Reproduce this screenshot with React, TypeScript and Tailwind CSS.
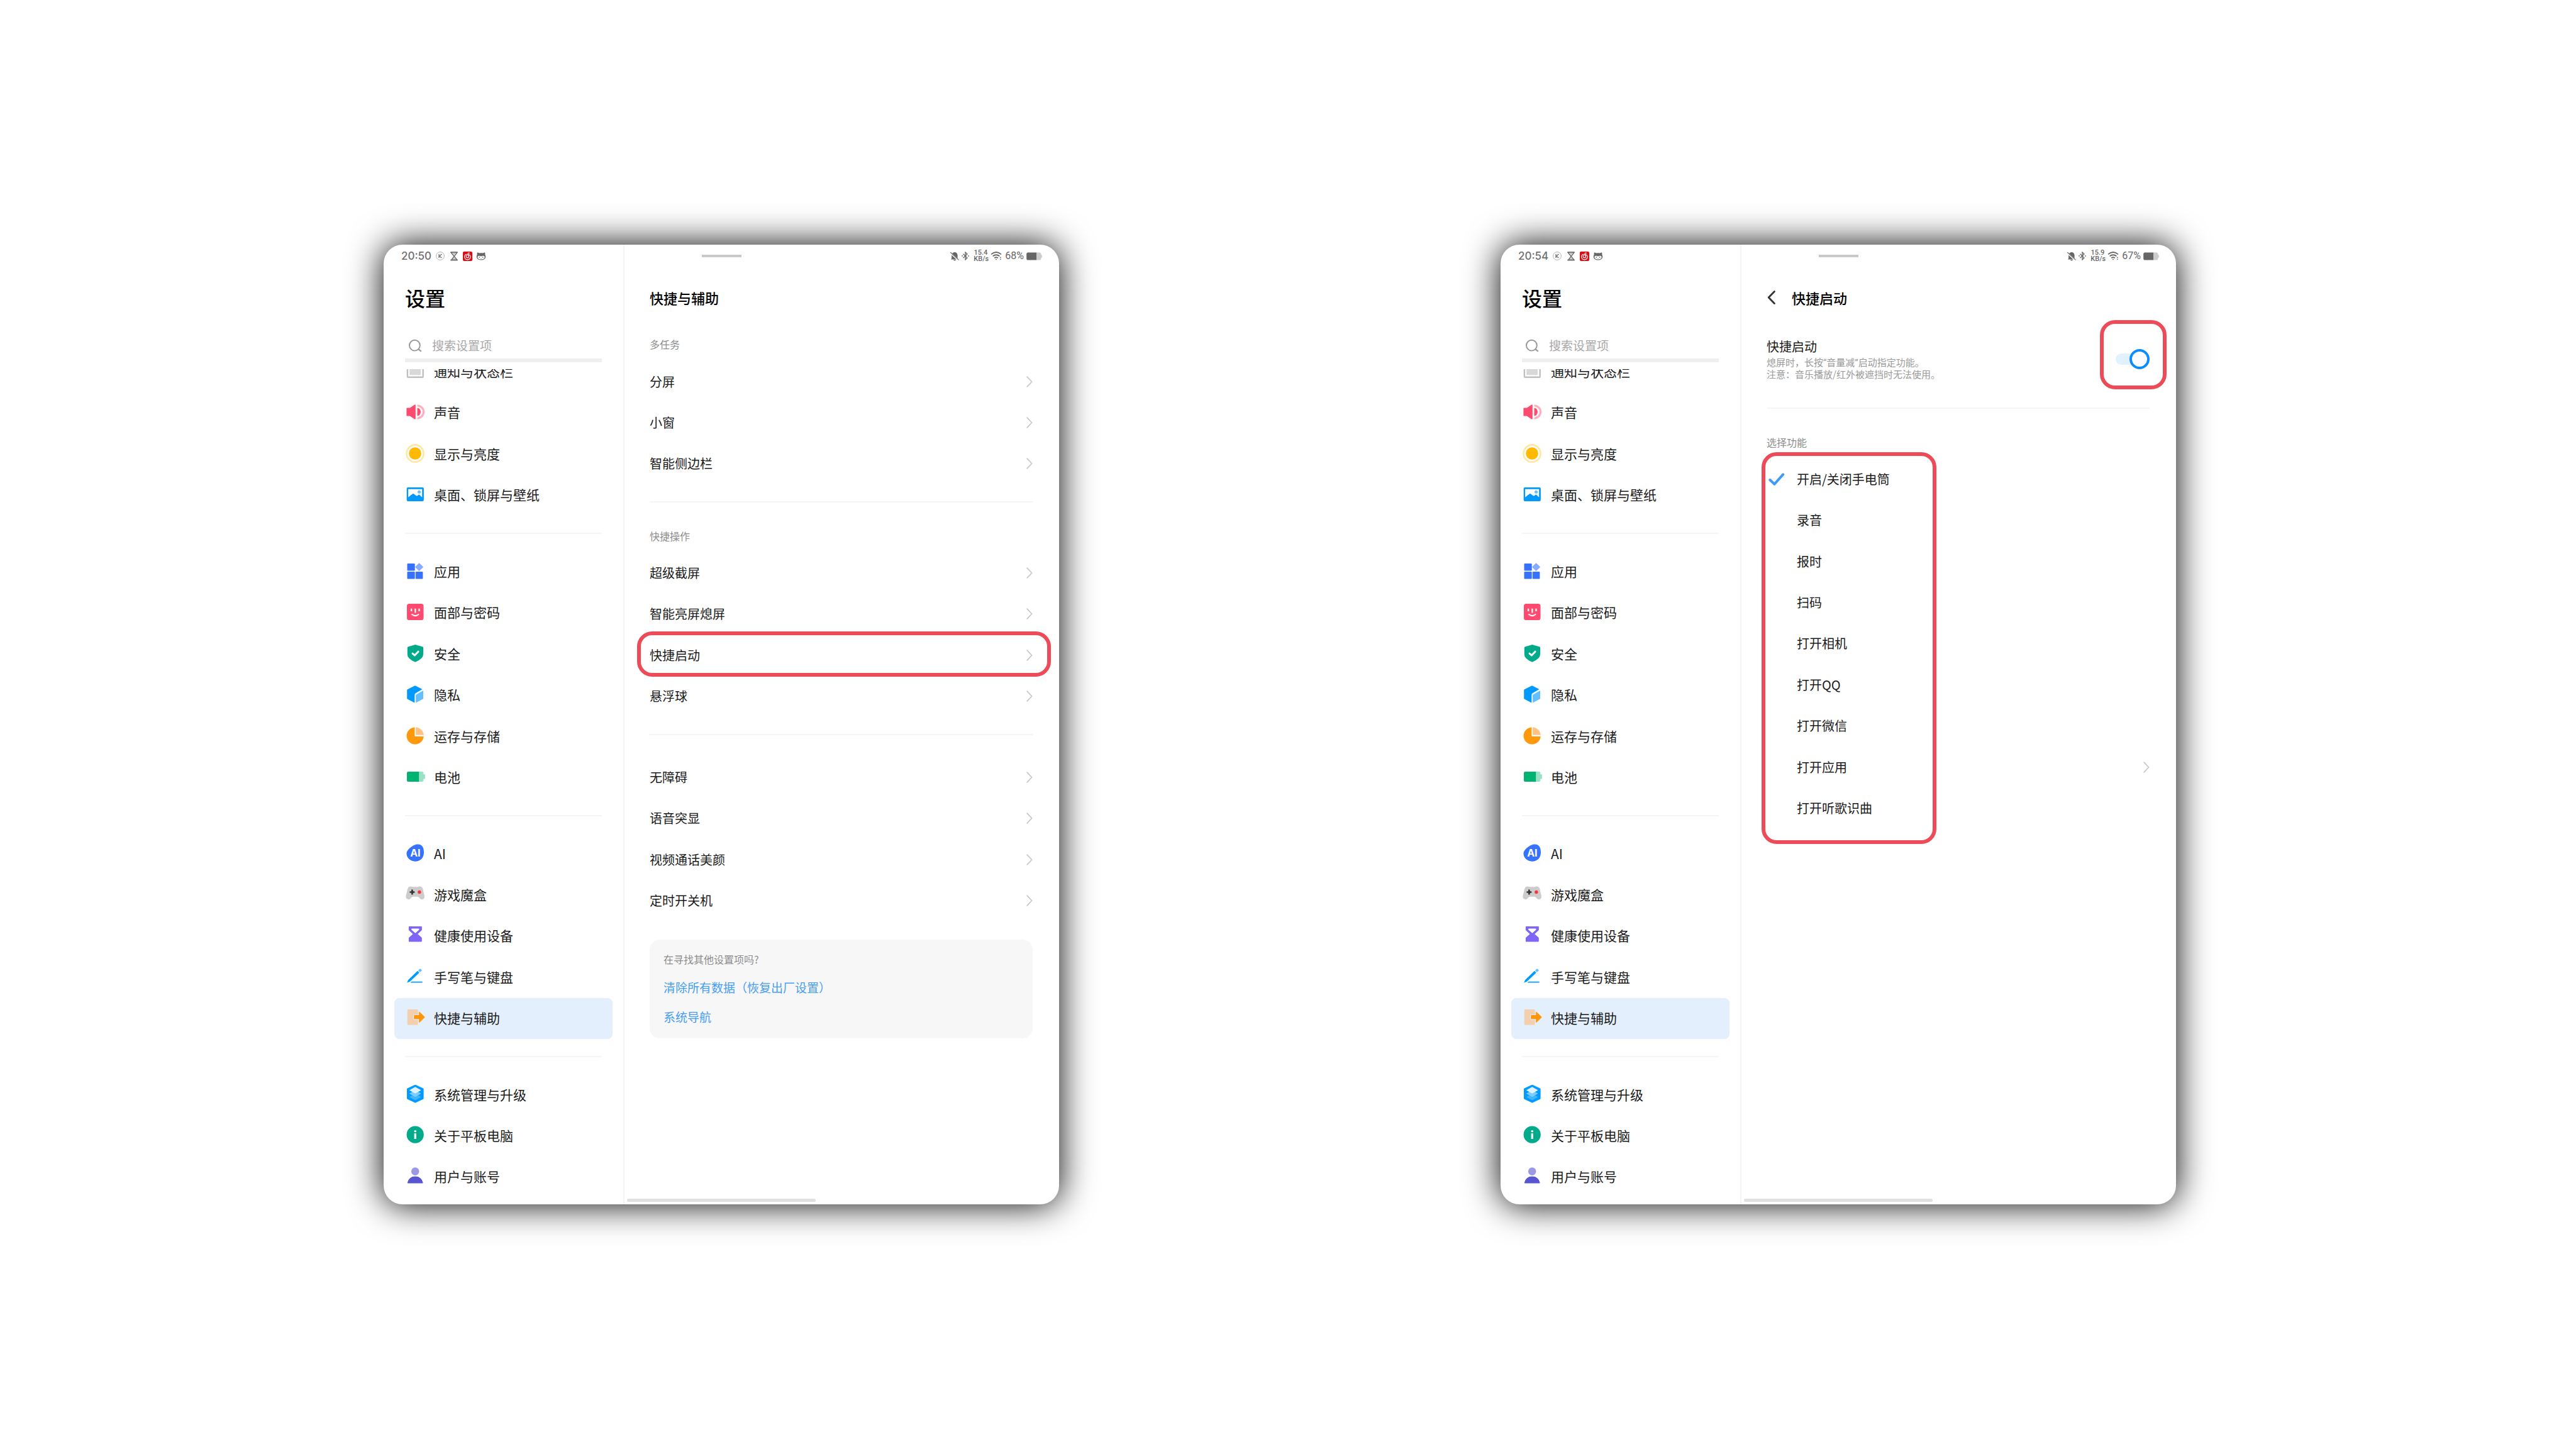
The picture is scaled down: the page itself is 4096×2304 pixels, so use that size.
import React, { useState } from 'react';
import clsx from 'clsx';

interface MenuItem {
  label: string;
  icon: React.ReactNode;
}

const Svg: React.FC<{ children: React.ReactNode }> = ({ children }) => (
  <svg viewBox="0 0 32 32" fill="none" className="w-8 h-8 shrink-0" aria-hidden="true">{children}</svg>
);

const icons = {
  notify: (
    <Svg>
      <rect x="3.9" y="6.3" width="24.8" height="19.5" rx="1.6" stroke="#c0c0c0" strokeWidth="2.4" />
      <rect x="7.3" y="9.8" width="17.7" height="12.5" fill="#d8d8d8" />
    </Svg>
  ),
  sound: (
    <Svg>
      <path d="M3.4 9.6H7.8L15.2 4.6Q16.8 3.8 16.8 5.4V26.6Q16.8 28.2 15.2 27.4L7.8 22.4H3.4Q2.4 22.4 2.4 21.4V10.6Q2.4 9.6 3.4 9.6Z" fill="#ff4b70" />
      <path d="M19.5 9.6A6.5 6.5 0 0 1 19.5 22.4Z" fill="#ff4b70" />
      <path d="M19.5 6A10 10 0 0 1 19.5 26" stroke="#ffacbd" strokeWidth="3.2" />
    </Svg>
  ),
  display: (
    <Svg>
      <circle cx="16" cy="16" r="13.6" stroke="#ffe6a1" strokeWidth="2.6" />
      <circle cx="16" cy="16" r="9.8" fill="#ffb900" />
    </Svg>
  ),
  wallpaper: (
    <Svg>
      <rect x="2.7" y="5.1" width="27.2" height="21.8" rx="2" fill="#009aff" />
      <path d="M5.1 7.8H27.2V20.8L22.9 16.8Q22.2 16.3 21.5 16.8L19.2 18.4Q18.5 18.8 17.8 18.3L13.9 15.2Q13 14.6 12.1 15.2L5.1 20.7Z" fill="#fff" />
      <circle cx="22.5" cy="12.2" r="2.5" fill="#66bfff" />
    </Svg>
  ),
  apps: (
    <Svg>
      <g fill="#3772ff">
        <rect x="3.5" y="3.9" width="12.2" height="11.6" rx="1.2" />
        <rect x="3.5" y="17" width="12.2" height="11.6" rx="1.2" />
        <rect x="16.8" y="17" width="11.6" height="11.6" rx="1.2" />
      </g>
      <path d="M21.8 3.7Q22.5 3 23.2 3.7L28.6 8.9Q29.3 9.6 28.6 10.3L23.2 15.4Q22.5 16.1 21.8 15.4L16.5 10.3Q15.8 9.6 16.5 8.9Z" fill="#8aabff" />
    </Svg>
  ),
  face: (
    <Svg>
      <rect x="3" y="3" width="26.5" height="26" rx="3.6" fill="#ff4b70" />
      <path d="M10.1 10.8V15.1M22.4 10.8V15.1M16.3 10.8V17.4" stroke="#fff" strokeWidth="2.3" />
      <path d="M11.2 20Q16.3 24.2 21.4 20" stroke="#fff" strokeWidth="2.2" strokeLinecap="round" />
    </Svg>
  ),
  shield: (
    <Svg>
      <path d="M15.6 2.2Q16.3 1.9 17 2.2L28.2 5.4Q29 5.7 29 6.5V17.5Q29 21 26.3 23.5Q22.5 27.3 17 29.4Q16.3 29.7 15.6 29.4Q10 27.3 6.4 23.5Q3.8 21 3.8 17.5V6.5Q3.8 5.7 4.6 5.4Z" fill="#00aa8b" />
      <path d="M12 16.2L15.4 19L21 13.2" stroke="#fff" strokeWidth="3" strokeLinecap="round" strokeLinejoin="round" />
    </Svg>
  ),
  privacy: (
    <Svg>
      <path d="M15.3 2.4Q16 2 16.7 2.4L27.6 8L16.8 14.3Q15.3 15.2 15.3 17V29.6L3.8 23.6Q3.2 23.2 3.2 22.5V9.3Q3.2 8.6 3.8 8.3Z" fill="#009aff" />
      <path d="M29 10V22.4Q29 23.1 28.3 23.5L17.1 29.6V17.6Q17.1 16.8 17.8 16.4Z" fill="#63bfff" />
    </Svg>
  ),
  storage: (
    <Svg>
      <path d="M15.4 2.4A13.6 13.6 0 1 0 29.7 17H17Q15.4 17 15.4 15.4Z" fill="#ff990b" />
      <path d="M17.1 2.5A13.2 13.2 0 0 1 29.7 14.8H17.9Q17.1 14.8 17.1 14Z" fill="#ffc285" />
    </Svg>
  ),
  battery: (
    <Svg>
      <path d="M22.3 7.9H27.3Q29.4 7.9 29.4 10V12.2H31Q31.9 12.2 31.9 13.1V18.7Q31.9 19.6 31 19.6H29.4V22Q29.4 24.1 27.3 24.1H22.3Z" fill="#96e2c3" />
      <path d="M22.3 7.9H5.1Q3 7.9 3 10V22Q3 24.1 5.1 24.1H22.3Z" fill="#00b371" />
    </Svg>
  ),
  ai: (
    <Svg>
      <path d="M2.5 16.6C2.3 9.6 13.4 1.5 20.6 1.5C27.5 1.5 30 7 30 14.5C30 23.6 24 28.7 16 28.7C8 28.7 2.6 22.5 2.5 16.6Z" fill="#3772ff" />
      <text x="16.4" y="21" textAnchor="middle" className="font-['Inter',sans-serif] text-[16px] font-bold fill-white">AI</text>
    </Svg>
  ),
  game: (
    <Svg>
      <path d="M9.2 3.5Q10.5 3.5 12 4.3H20.6Q22 3.5 23.4 3.5Q27 3.5 28.2 7L30.9 18.3Q31.8 23 27.5 24.1Q25.3 24.6 23.6 22.5L21.4 20.2Q20.8 19.7 20 19.7H12.6Q11.8 19.7 11.2 20.2L9 22.5Q7.2 24.6 4.9 24.1Q.6 23 1.5 18.3L4.3 7Q5.5 3.5 9.2 3.5Z" fill="#ccc" />
      <path d="M11.4 8.6V16.4M7.5 12.5H15.3" stroke="#333" strokeWidth="2.6" />
      <circle cx="22.9" cy="12.5" r="2.7" fill="#fc3338" />
    </Svg>
  ),
  hourglass: (
    <Svg>
      <path
        fillRule="evenodd"
        d="M6.7 2H26Q26.8 2 26.8 2.8V7.2Q26.8 8 26.2 8.5L20.2 14.2L26.2 19.6Q26.8 20.1 26.8 20.9V25.6Q26.8 26.4 26 26.4H6.7Q5.9 26.4 5.9 25.6V20.9Q5.9 20.1 6.5 19.6L12.5 14.2L6.5 8.5Q5.9 8 5.9 7.2V2.8Q5.9 2 6.7 2ZM10.8 5.4Q10.1 5.4 10.1 6.1V7.2L16.4 12.8L22.6 7.2V6.1Q22.6 5.4 21.9 5.4Z"
        fill="#8064f5"
      />
    </Svg>
  ),
  pen: (
    <Svg>
      <path d="M3.3 25.4L4.6 22Q5 21.2 5.7 20.5L20 6.8L22.7 9.8L8.6 23Q7.8 23.7 6.9 24.2Z" fill="#009bff" />
      <path d="M21 6L23.3 3.8Q24.2 3 25 3.8L26.4 5.3Q27 6 26.3 6.7L23.7 9Z" fill="#63bfff" />
      <path d="M10.6 23.8H27Q27.8 23.8 27.8 24.6T27 25.5H8.4Z" fill="#009bff" />
    </Svg>
  ),
  shortcut: (
    <Svg>
      <rect x="3.7" y="3.1" width="17" height="24.7" rx="2" fill="#f3cfae" />
      <path d="M15 12H22.2V7.4Q22.3 6.2 23.3 7L31.2 14.7Q31.7 15.3 31.2 15.9L23.3 23.7Q22.3 24.4 22.2 23.2V18.6H15Q14.2 18.6 14.2 17.8V12.8Q14.2 12 15 12Z" fill="#ff9809" stroke="#e3effd" strokeWidth="2.2" paintOrder="stroke" />
    </Svg>
  ),
  system: (
    <Svg>
      <path d="M15.5 1.1Q16.3.7 17.1 1.1L28.8 6.4Q29.6 6.8 29.6 7.6V22.6Q29.6 23.4 28.8 23.8L17.1 29.2Q16.3 29.6 15.5 29.2L3.8 23.8Q3 23.4 3 22.6V7.6Q3 6.8 3.8 6.4Z" fill="#009bff" />
      <path d="M6.8 20.2L16.3 15L25.6 20.2L16.3 25.6Z" fill="#40b4ff" />
      <path d="M6.8 14.8L16.3 9.8L25.6 14.8L16.3 20.2Z" fill="#80cbff" />
      <path d="M6.8 9.5L16.3 4.2L25.6 9.5L16.3 14.8Z" fill="#e0f1ff" />
    </Svg>
  ),
  about: (
    <Svg>
      <circle cx="16.2" cy="15.2" r="13.6" fill="#00aa8b" />
      <circle cx="16.2" cy="9.8" r="1.8" fill="#fff" />
      <path d="M16.2 13V22" stroke="#fff" strokeWidth="3.2" />
    </Svg>
  ),
  user: (
    <Svg>
      <circle cx="16.2" cy="8.6" r="6.3" fill="#9b98e4" />
      <path d="M4.6 27.4Q3.6 27.4 3.9 26.3Q6.5 16.6 16.2 16.6T28.5 26.3Q28.8 27.4 27.8 27.4Z" fill="#5855d0" />
    </Svg>
  ),
};

const menuGroups: { height: string; items: MenuItem[] }[] = [
  {
    height: 'h-[262px]',
    items: [
      { label: '通知与状态栏', icon: icons.notify },
      { label: '声音', icon: icons.sound },
      { label: '显示与亮度', icon: icons.display },
      { label: '桌面、锁屏与壁纸', icon: icons.wallpaper },
    ],
  },
  {
    height: 'h-[393px]',
    items: [
      { label: '应用', icon: icons.apps },
      { label: '面部与密码', icon: icons.face },
      { label: '安全', icon: icons.shield },
      { label: '隐私', icon: icons.privacy },
      { label: '运存与存储', icon: icons.storage },
      { label: '电池', icon: icons.battery },
    ],
  },
  {
    height: 'h-[327px]',
    items: [
      { label: 'AI', icon: icons.ai },
      { label: '游戏魔盒', icon: icons.game },
      { label: '健康使用设备', icon: icons.hourglass },
      { label: '手写笔与键盘', icon: icons.pen },
      { label: '快捷与辅助', icon: icons.shortcut },
    ],
  },
  {
    height: 'h-[196px]',
    items: [
      { label: '系统管理与升级', icon: icons.system },
      { label: '关于平板电脑', icon: icons.about },
      { label: '用户与账号', icon: icons.user },
    ],
  },
];

const Chevron = () => (
  <svg viewBox="0 0 10 18" fill="none" className="w-[10px] h-[18px] shrink-0" aria-hidden="true">
    <path d="M1.2 1.2L8.6 9L1.2 16.8" stroke="#c8c8c8" strokeWidth="1.8" strokeLinecap="round" strokeLinejoin="round" />
  </svg>
);

const Divider = ({ className }: { className?: string }) => (
  <hr className={clsx('h-[2px] border-0 bg-[#f5f5f5]', className)} />
);

// Red outline drawn over the control being pointed out
const Callout = ({ className }: { className: string }) => (
  <span className={clsx('absolute rounded-3xl border-[6px] border-[#ec4b57] pointer-events-none', className)} />
);

const AppBadges = () => (
  <>
    <svg viewBox="0 0 14 14" className="w-[14px] h-[14px] ml-[7px]" aria-hidden="true">
      <circle cx="7" cy="7" r="6.4" fill="none" stroke="#8c8c8c" strokeWidth=".7" />
      <path d="M5 4V10M9.4 4L5.6 7.4L9.4 10" fill="none" stroke="#707070" strokeWidth="1.3" />
    </svg>
    <svg viewBox="0 0 12 15" className="w-3 h-[15px] ml-[9px]" fill="none" aria-hidden="true">
      <path d="M1.2 1.5H10.8L1.8 13.3H10.8L1.2 1.5Z" stroke="#707070" strokeWidth="1.5" />
      <path d="M.4 1.2H11.6M.4 13.7H11.6" stroke="#707070" strokeWidth="1.8" />
      <path d="M4.5 3.6H7.6M4.5 11.2H7.6" stroke="#999" strokeWidth="1" />
    </svg>
    <svg viewBox="0 0 15 15" className="w-[15px] h-[15px] ml-2" fill="none" aria-hidden="true">
      <rect width="15" height="15" rx="2" fill="#dd0a12" />
      <path d="M5.3 4.2C3.2 5.4 2.4 7.2 2.8 9.1C3.3 11.4 5.3 12.8 7.5 12.8C10.2 12.8 12.4 10.8 12.2 8.2C12 6.2 10.3 4.8 8.2 4.8C6.4 4.8 5.2 6.2 5.3 7.8C5.4 9 6.3 9.9 7.5 9.9C8.9 9.9 9.6 8.8 9.4 7.7L8.1 3.6C7.9 2.3 9.2 1.7 10.4 2.6" stroke="#fff" strokeWidth="1.2" strokeLinecap="round" />
    </svg>
    <svg viewBox="0 0 16 13" className="w-4 h-[13px] ml-[6px]" aria-hidden="true">
      <path d="M2 .5Q3.6.6 5 1.5Q8 .9 11 1.5Q12.4.6 14 .5Q14.8 2.4 14.2 4Q15.4 5.5 15.2 7.4C14.8 10.8 12 12.4 8 12.4S1.2 10.8.8 7.4Q.6 5.5 1.8 4Q1.2 2.4 2 .5Z" fill="#666" />
      <path d="M4.2 5.8Q6.4 5.4 8 6.8Q9.6 5.4 11.8 5.8C13.4 6.2 13.9 7.4 13.5 8.7C12.9 10.6 11 11.4 8 11.4S3.1 10.6 2.5 8.7C2.1 7.4 2.6 6.2 4.2 5.8Z" fill="#fff" />
      <ellipse cx="5.3" cy="8.1" rx=".8" ry="1" fill="#707070" />
      <ellipse cx="10.7" cy="8.1" rx=".8" ry="1" fill="#707070" />
      <path d="M7 9.9Q8 10.6 9 9.9" stroke="#707070" strokeWidth=".6" fill="none" />
    </svg>
  </>
);

const SystemStatus = ({ speed, battery }: { speed: string; battery: string }) => (
  <div className="flex items-center text-[#666] font-['Roboto',sans-serif]">
    <svg viewBox="0 0 14 15" className="w-[14px] h-[15px]" aria-hidden="true">
      <path d="M4.2 2Q7 -.2 9.8 2Q11.6 3.4 11.6 6V10.4L12.6 12.4H1.2L2.2 10.4V6Q2.2 3.4 4.2 2ZM5 13H9Q8.4 14.6 7 14.6T5 13Z" fill="#666" />
      <path d="M-.4 1.6L13.2 14.2" stroke="#fff" strokeWidth="2.4" />
      <path d="M.3 1.2L13.6 13.6" stroke="#666" strokeWidth="1.1" />
    </svg>
    <svg viewBox="0 0 12 14" className="w-3 h-[14px] ml-1" fill="none" aria-hidden="true">
      <path d="M2.4 3.8L9 10L6 13V1L9 4L2.4 10.2" stroke="#666" strokeWidth="1.3" />
      <circle cx="1" cy="7" r=".9" fill="#666" />
      <circle cx="11" cy="7" r=".9" fill="#666" />
    </svg>
    <span className="ml-[7px] w-[22px] text-[11px] leading-[10px] font-medium text-center">
      {speed}
      <br />
      KB/s
    </span>
    <svg viewBox="0 0 18 14" className="w-[18px] h-[14px] ml-[5px]" fill="none" aria-hidden="true">
      <path d="M1 4.4Q9 -2.4 17 4.4M3.6 7.4Q9 3 14.4 7.4M6.2 10.2Q9 8 11.8 10.2" stroke="#666" strokeWidth="1.8" />
      <path d="M7.4 11.8H10.6L9 13.6Z" fill="#666" />
      <path d="M14.6 10L15.9 8.2L17.2 10ZM14.6 11.4L15.9 13.4L17.2 11.4Z" fill="#666" />
    </svg>
    <span className="ml-[5px] text-[16px] leading-5">{battery}</span>
    <svg viewBox="0 0 25 13" className="w-[25px] h-[13px] ml-[4px]" aria-hidden="true">
      <path d="M16 .4H20.6Q23.2.4 23.4 3V3.9Q24.8 4 24.8 5V8Q24.8 9 23.4 9.1V10Q23.2 12.6 20.6 12.6H16Z" fill="#ccc" />
      <path d="M16 .4H2.8Q.2.4.2 3V10Q.2 12.6 2.8 12.6H16Z" fill="#666" />
    </svg>
  </div>
);

const Sidebar = ({ time }: { time: string }) => (
  <aside className="w-[383px] shrink-0 border-r-2 border-[#f4f4f4] pb-[11px]">
    <div className="h-9 pl-[28px] flex items-center">
      <span className="font-['Inter',sans-serif] text-[17px] leading-5 font-medium text-[#707070]">{time}</span>
      <AppBadges />
    </div>
    <h1 className="mt-[26px] ml-[34px] text-[32px] leading-[44px] font-medium text-black">设置</h1>
    <label className="mt-[35px] mx-[34px] h-[46px] flex items-center gap-[11px] border-b-[6px] border-[#efefef]">
      <svg viewBox="0 0 32 32" fill="none" className="w-8 h-8 shrink-0" aria-hidden="true">
        <circle cx="15.4" cy="15.2" r="8.4" stroke="#999" strokeWidth="1.9" />
        <path d="M21.4 21.4L25 24" stroke="#999" strokeWidth="2.2" strokeLinecap="round" />
      </svg>
      <input
        type="text"
        aria-label="搜索设置项"
        placeholder="搜索设置项"
        className="min-w-0 flex-1 pb-0.5 text-[19px] leading-7 bg-transparent outline-none placeholder:text-[#a8a8a8]"
      />
    </label>
    {/* list is scrolled a little, so the first row is cut off */}
    <nav className="mt-[11px] overflow-hidden">
      <div className="-mt-[29px]">
        {menuGroups.map((group, i) => (
          <div key={i}>
            {i > 0 && <Divider className="my-[27px] mx-[34px]" />}
            <div className={clsx('grid auto-rows-fr px-[17px]', group.height)}>
              {group.items.map((item) => (
                <a
                  key={item.label}
                  href="#"
                  className={clsx(
                    'flex items-center gap-[14px] pl-[17px] pb-0.5 rounded-lg text-[21px] leading-7 text-[#1a1a1a]',
                    item.label === '快捷与辅助' && 'bg-[#e3effd]'
                  )}
                >
                  {item.icon}
                  {item.label}
                </a>
              ))}
            </div>
          </div>
        ))}
      </div>
    </nav>
  </aside>
);

interface TabletProps {
  time: string;
  speed: string;
  battery: string;
  children: React.ReactNode;
}

const Tablet: React.FC<TabletProps> = ({ time, speed, battery, children }) => (
  <section className="flex-1 min-w-0 flex rounded-[30px] bg-white shadow-[0_0_56px_#000] overflow-hidden">
    <Sidebar time={time} />
    <main className="flex-1 min-w-0 flex flex-col">
      <div className="h-9 pl-[123px] pr-[27px] flex items-center justify-between">
        <span className="w-[63px] h-1 bg-[#c8c8c8]" />
        <SystemStatus speed={speed} battery={battery} />
      </div>
      <div className="mt-[26px] pl-10 pr-[42px]">{children}</div>
      <div className="mt-auto mb-1 ml-1 w-[300px] h-[5px] rounded-full bg-[#e0e0e0]" />
    </main>
  </section>
);

const LinkRows = ({ height, items }: { height: string; items: string[] }) => (
  <div className={clsx('grid auto-rows-fr', height)}>
    {items.map((item) => (
      <a key={item} href="#" className="relative flex items-center justify-between text-[20px] leading-7 text-[#1a1a1a]">
        {item}
        <Chevron />
        {item === '快捷启动' && <Callout className="-top-[5px] -bottom-[1px] -left-5 -right-[29px]" />}
      </a>
    ))}
  </div>
);

const AssistPage = () => (
  <>
    <h2 className="text-[22px] leading-[44px] font-medium text-black">快捷与辅助</h2>
    <h3 className="mt-10 mb-[15px] text-[16px] leading-6 text-[#8c8c8c]">多任务</h3>
    <LinkRows height="h-[196px]" items={['分屏', '小窗', '智能侧边栏']} />
    <Divider className="mt-[27px] mb-[41px]" />
    <h3 className="mb-[14px] text-[16px] leading-6 text-[#8c8c8c]">快捷操作</h3>
    <LinkRows height="h-[262px]" items={['超级截屏', '智能亮屏熄屏', '快捷启动', '悬浮球']} />
    <Divider className="mt-[27px] mb-[34px]" />
    <LinkRows height="h-[262px]" items={['无障碍', '语音突显', '视频通话美颜', '定时开关机']} />
    <div className="mt-[29px] px-[22px] pt-[19px] pb-[22px] rounded-2xl bg-[#f7f7f7] flex flex-col items-start">
      <p className="text-[16px] leading-6 text-[#8c8c8c]">在寻找其他设置项吗?</p>
      <a href="#" className="mt-[21px] text-[19px] leading-6 text-[#459df5]">清除所有数据（恢复出厂设置）</a>
      <a href="#" className="mt-[23px] text-[19px] leading-6 text-[#459df5]">系统导航</a>
    </div>
  </>
);

const actions = ['开启/关闭手电筒', '录音', '报时', '扫码', '打开相机', '打开QQ', '打开微信', '打开应用', '打开听歌识曲'];

const QuickLaunchPage = () => {
  const [enabled, setEnabled] = useState(true);
  const [action, setAction] = useState(actions[0]);

  return (
    <>
      <div className="flex items-center gap-[26px]">
        <button type="button" aria-label="返回">
          <svg viewBox="0 0 14 22" fill="none" className="w-[14px] h-[22px]">
            <path d="M12.4 1.6L3.2 11L12.4 20.4" stroke="#333" strokeWidth="2.8" strokeLinecap="round" strokeLinejoin="round" />
          </svg>
        </button>
        <h2 className="text-[22px] leading-[44px] font-medium text-black">快捷启动</h2>
      </div>
      <div className="relative mt-[42px] flex items-center justify-between">
        <label htmlFor="quick-launch">
          <span className="block text-[20px] leading-7 text-[#1a1a1a]">快捷启动</span>
          <span className="block mt-[2px] text-[15px] leading-[18px] text-[#999]">
            熄屏时，长按<span className="font-['Roboto',sans-serif]">“</span>音量减
            <span className="font-['Roboto',sans-serif]">”</span>启动指定功能。
            <br />
            注意：音乐播放/红外被遮挡时无法使用。
          </span>
        </label>
        <span className="grid items-center w-[54px]">
          <input
            id="quick-launch"
            type="checkbox"
            role="switch"
            checked={enabled}
            onChange={(e) => setEnabled(e.target.checked)}
            className="peer appearance-none col-start-1 row-start-1 w-[48px] h-[18px] rounded-full bg-[#e2f1ff]"
          />
          <span className="col-start-1 row-start-1 w-8 h-8 rounded-full border-4 border-[#c8c8c8] bg-[#fafcff] peer-checked:justify-self-end peer-checked:border-[#0a8cff] pointer-events-none" />
        </span>
        <Callout className="-top-[28px] -bottom-[15px] -right-[27px] w-[106px]" />
      </div>
      <Divider className="mt-[44px] mb-[41px]" />
      <h3 className="mb-[14px] text-[16px] leading-6 text-[#8c8c8c]">选择功能</h3>
      <div role="radiogroup" aria-label="选择功能" className="relative grid auto-rows-fr h-[589px]">
        {actions.map((item) => (
          <label key={item} className="relative flex items-center text-[20px] leading-7 text-[#1a1a1a]">
            <input
              type="radio"
              name="action"
              checked={action === item}
              onChange={() => setAction(item)}
              className="peer sr-only"
            />
            <svg viewBox="0 0 32 32" fill="none" className="w-8 h-8 mr-4 invisible peer-checked:visible" aria-hidden="true">
              <path d="M5.4 17L12.4 23.8L26.2 8.4" stroke="#3f9bf8" strokeWidth="4" strokeLinecap="round" strokeLinejoin="round" />
            </svg>
            <span className="flex-1">{item}</span>
            {item === '打开应用' && <Chevron />}
          </label>
        ))}
        <Callout className="-top-[10px] -bottom-[24px] -left-2 w-[278px]" />
      </div>
    </>
  );
};

export default function App() {
  return (
    <div className="flex gap-[702px] pl-[610px] pr-[636px] py-[389px] bg-white font-['Noto_Sans_CJK_SC',sans-serif]">
      <Tablet time="20:50" speed="15.4" battery="68%">
        <AssistPage />
      </Tablet>
      <Tablet time="20:54" speed="15.9" battery="67%">
        <QuickLaunchPage />
      </Tablet>
    </div>
  );
}
